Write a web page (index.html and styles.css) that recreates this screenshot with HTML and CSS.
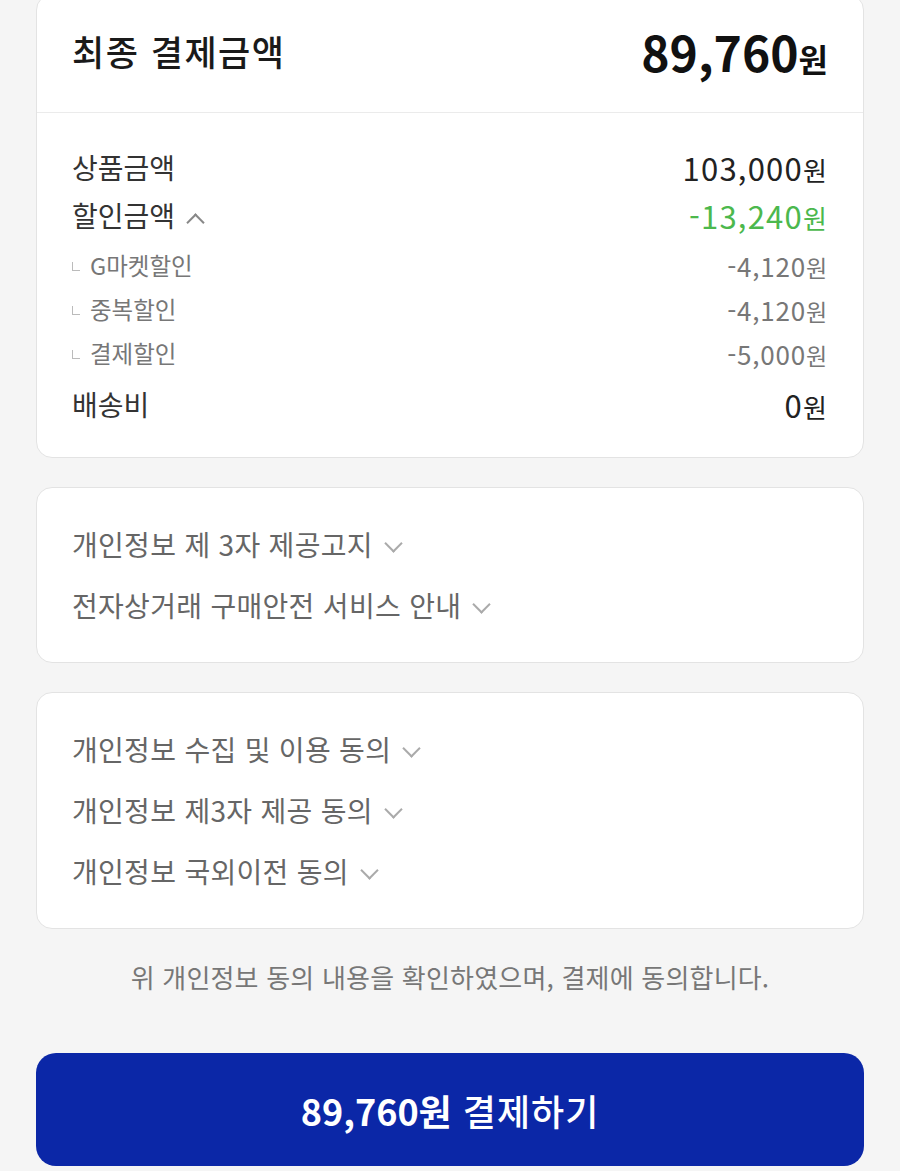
FILE: index.html
```
<!DOCTYPE html>
<html lang="ko">

<head>
    <meta charset="UTF-8">
    <title>결제</title>
    <link rel="stylesheet" href="styles.css">
</head>

<body>
    <div class="page">
        <section class="card total">
            <div class="total-head">
                <h2>최종 결제금액</h2>
                <p class="total-price">89,760<span>원</span></p>
            </div>
            <div class="total-body">
                <div class="line">
                    <span class="label">상품금액</span>
                    <span class="price">103,000<small>원</small></span>
                </div>
                <div class="line">
                    <span class="label">할인금액 <i class="chev up"></i></span>
                    <span class="price green">-13,240<small>원</small></span>
                </div>
                <div class="subs">
                    <div class="sub">
                        <span class="label">G마켓할인</span>
                        <span class="price">-4,120<small>원</small></span>
                    </div>
                    <div class="sub">
                        <span class="label">중복할인</span>
                        <span class="price">-4,120<small>원</small></span>
                    </div>
                    <div class="sub">
                        <span class="label">결제할인</span>
                        <span class="price">-5,000<small>원</small></span>
                    </div>
                </div>
                <div class="line">
                    <span class="label">배송비</span>
                    <span class="price">0<small>원</small></span>
                </div>
            </div>
        </section>

        <section class="card terms">
            <a class="term">개인정보 제 3자 제공고지 <i class="chev"></i></a>
            <a class="term">전자상거래 구매안전 서비스 안내 <i class="chev"></i></a>
        </section>

        <section class="card terms">
            <a class="term">개인정보 수집 및 이용 동의 <i class="chev"></i></a>
            <a class="term">개인정보 제3자 제공 동의 <i class="chev"></i></a>
            <a class="term">개인정보 국외이전 동의 <i class="chev"></i></a>
        </section>

        <p class="notice">위 개인정보 동의 내용을 확인하였으며, 결제에 동의합니다.</p>

        <button class="pay"><b>89,760원</b> 결제하기</button>
    </div>
</body>

</html>
```

FILE: styles.css
```
body {
    margin: 0;
    background: #f5f5f5;
    font-family: "Noto Sans CJK KR", "Noto Sans", sans-serif;
    color: #222;
}

.page {
    padding: 0 36px;
}

.card {
    background: #fff;
    border: 1px solid #e3e3e3;
    border-radius: 16px;
    margin-bottom: 29px;
}

.total {
    margin-top: -6px;
}

.total-head {
    display: flex;
    justify-content: space-between;
    align-items: center;
    height: 111px;
    padding: 0 35px 6px 35px;
    border-bottom: 1px solid #ebebeb;
}

.total-head h2 {
    margin: 0;
    font-size: 35px;
    font-weight: 500;
    color: #1a1a1a;
    letter-spacing: 1.5px;
}

.total-price {
    margin: 0;
    font-size: 48px;
    font-weight: 700;
    color: #111;
    letter-spacing: 0;
}

.total-price span {
    font-size: 32px;
}

.total-body {
    padding: 30px 35px 29px 35px;
}

.line,
.sub {
    display: flex;
    justify-content: space-between;
    align-items: center;
}

.line {
    height: 48px;
    font-size: 28px;
    color: #333;
}

.line .price {
    font-size: 31px;
    letter-spacing: 1.2px;
    color: #222;
}

.price small {
    font-size: 26px;
}

.green {
    color: #4cb84d !important;
}

.subs {
    padding: 4px 0 5px;
}

.sub {
    height: 44px;
    font-size: 23.5px;
    color: #777;
}

.sub .label::before {
    content: "";
    display: inline-block;
    width: 7px;
    height: 8px;
    margin: 0 10px 4px 0;
    border-left: 1.5px solid #bbb;
    border-bottom: 1.5px solid #bbb;
}

.sub .price {
    font-size: 26px;
    letter-spacing: 0.8px;
}

.sub .price small {
    font-size: 23px;
}

.chev {
    display: inline-block;
    width: 11px;
    height: 11px;
    border-right: 2px solid #aaa;
    border-bottom: 2px solid #aaa;
    transform: rotate(45deg);
    margin: 0 0 10px 6px;
    vertical-align: middle;
}

.chev.up {
    transform: rotate(-135deg);
    margin: 6px 0 0 6px;
    border-color: #888;
}

.terms {
    display: flex;
    flex-direction: column;
    padding: 26px 35px;
}

.term {
    line-height: 61px;
    font-size: 28px;
    letter-spacing: 0.3px;
    color: #666;
}

.notice {
    margin: 31px 0 59px;
    text-align: center;
    font-size: 26px;
    line-height: 34px;
    letter-spacing: 0.2px;
    color: #777;
}

.pay {
    display: block;
    width: 100%;
    height: 113px;
    border: none;
    border-radius: 20px;
    background: #0b27a7;
    color: #fff;
    font-family: inherit;
    font-size: 36px;
    font-weight: 500;
    letter-spacing: 1px;
}

.pay b {
    font-weight: 700;
    letter-spacing: 0;
}
```
